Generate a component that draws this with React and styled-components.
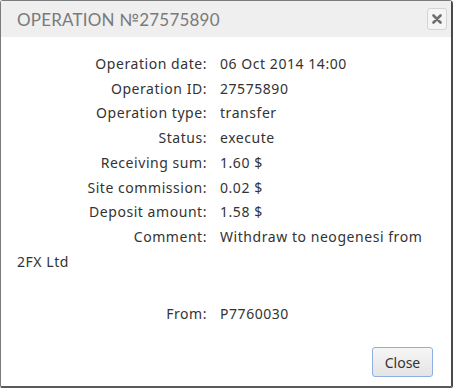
import * as React from "react";
import styled, { createGlobalStyle } from "styled-components";

const rows = [
  { label: "Operation date:", value: "06 Oct 2014 14:00" },
  { label: "Operation ID:", value: "27575890" },
  { label: "Operation type:", value: "transfer" },
  { label: "Status:", value: "execute" },
  { label: "Receiving sum:", value: "1.60 $" },
  { label: "Site commission:", value: "0.02 $" },
  { label: "Deposit amount:", value: "1.58 $" },
  { label: "Comment:", value: "Withdraw to neogenesi from 2FX Ltd" },
];

const App = () => {
  return (
    <>
      <GlobalStyle />
      <Dialog>
        <Header>
          <Title>Operation №27575890</Title>
          <CloseIcon aria-label="close">
            <svg width="10" height="10" viewBox="0 0 10 10">
              <path d="M1.5 1.5 L8.5 8.5 M8.5 1.5 L1.5 8.5" stroke="#6f6f6f" strokeWidth="2.6" strokeLinecap="round" />
            </svg>
          </CloseIcon>
        </Header>
        <Body>
          {rows.map((r) => (
            <Line key={r.label}>
              <Label>{r.label}</Label>
              <Value>{r.value}</Value>
            </Line>
          ))}
          <Spacer />
          <Line>
            <Label>From:</Label>
            <Value>P7760030</Value>
          </Line>
        </Body>
        <Footer>
          <Button>Close</Button>
        </Footer>
      </Dialog>
    </>
  );
};

const GlobalStyle = createGlobalStyle`
  body {
    margin: 0;
    background: #ffffff;
  }
`;

const Dialog = styled.div`
  box-sizing: border-box;
  width: 453px;
  height: 388px;
  display: flex;
  flex-direction: column;
  background: #fff;
  border: 1px solid #7a7a7a;
  border-right: 2px solid #4a4a4a;
  border-bottom: 2px solid #5a5a5a;
  border-radius: 3px 4px 2px 2px;
  font-family: "Noto Sans", sans-serif;
  color: #333;
`;

const Header = styled.div`
  height: 36px;
  display: flex;
  align-items: center;
  justify-content: space-between;
  padding: 0 4px 0 16px;
  background: #efefef;
`;

const Title = styled.h1`
  margin: 0;
  font-family: "Lato", sans-serif;
  font-size: 17px;
  font-weight: 400;
  letter-spacing: 0.2px;
  text-transform: uppercase;
  color: #7a7a7a;
`;

const CloseIcon = styled.button`
  width: 20px;
  height: 22px;
  display: flex;
  align-items: center;
  justify-content: center;
  padding: 0;
  border: 1px solid #d4d4d4;
  border-radius: 3px;
  background: #f5f5f5;
`;

const Body = styled.div`
  flex: 1;
  padding: 15px 8px 0 16px;
  font-size: 14px;
  line-height: 24.7px;
  letter-spacing: 0.55px;
`;

const Line = styled.div`
  min-height: 24.7px;
`;

const Spacer = styled.div`
  height: 28px;
`;

const Label = styled.span`
  display: inline-block;
  width: 190px;
  text-align: right;
`;

const Value = styled.span`
  margin-left: 13px;
`;

const Footer = styled.div`
  display: flex;
  justify-content: flex-end;
  padding: 0 18px 9px 0;
`;

const Button = styled.button`
  width: 61px;
  height: 30px;
  font-family: "Noto Sans", sans-serif;
  font-size: 14px;
  color: #333;
  background: linear-gradient(#f6f6f6, #e4e4e4);
  border: 1px solid #8eaee6;
  border-radius: 3px;
`;

export default App;
